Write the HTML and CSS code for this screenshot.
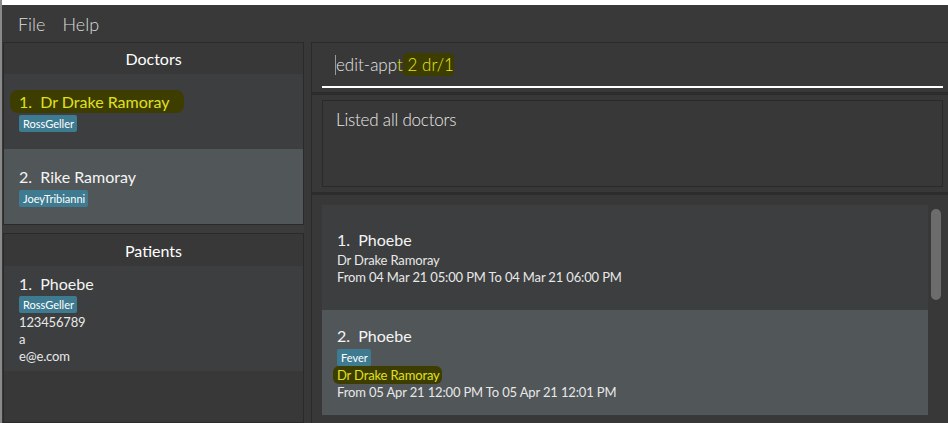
FILE: index.html
```html
<!DOCTYPE html>
<html>
<head>
<meta charset="utf-8">
<link rel="stylesheet" href="styles.css">
</head>
<body>
<div class="frame">
  <div class="topstrip"></div>
  <div class="menubar"><span>File</span><span>Help</span></div>
  <div class="main">
    <div class="left">
      <section class="panel doctors">
        <div class="panel-header">Doctors</div>
        <div class="cell dcell odd">
          <div class="name"><span class="mark">1.&nbsp; Dr Drake Ramoray</span></div>
          <div class="tags"><span class="tag">RossGeller</span></div>
        </div>
        <div class="cell dcell even">
          <div class="name">2.&nbsp; Rike Ramoray</div>
          <div class="tags"><span class="tag">JoeyTribianni</span></div>
        </div>
      </section>
      <div class="split"></div>
      <section class="panel patients">
        <div class="panel-header">Patients</div>
        <div class="cell pcell odd">
          <div class="name">1.&nbsp; Phoebe</div>
          <div class="tags"><span class="tag">RossGeller</span></div>
          <div class="detail">123456789</div>
          <div class="detail">a</div>
          <div class="detail">e@e.com</div>
        </div>
      </section>
    </div>
    <div class="right">
      <div class="command">
        <div class="field"><span class="caret"></span><span class="cmd">edit-app</span><span class="ycmd">t<span class="mark2"> 2 dr/1</span></span></div>
      </div>
      <div class="result">
        <div class="result-inner">Listed all doctors</div>
      </div>
      <div class="appts">
        <div class="appt-list">
          <div class="cell acell odd">
            <div class="name">1.&nbsp; Phoebe</div>
            <div class="detail">Dr Drake Ramoray</div>
            <div class="detail">From 04 Mar 21 05:00 PM To 04 Mar 21 06:00 PM</div>
          </div>
          <div class="cell acell even">
            <div class="name">2.&nbsp; Phoebe</div>
            <div class="tags"><span class="tag">Fever</span></div>
            <div class="detail"><span class="mark3">Dr Drake Ramoray</span></div>
            <div class="detail">From 05 Apr 21 12:00 PM To 05 Apr 21 12:01 PM</div>
          </div>
        </div>
        <div class="scrollbar"><div class="thumb"></div></div>
      </div>
    </div>
  </div>
</div>
</body>
</html>
```

FILE: styles.css
```css
* { box-sizing: border-box; }
html, body { margin: 0; padding: 0; }
body {
  width: 948px;
  height: 423px;
  overflow: hidden;
  background: #383838;
  font-family: Lato, "Open Sans", sans-serif;
  color: #ffffff;
}
.frame {
  height: 423px;
  border-left: 2px solid #8a8a8a;
  display: flex;
  flex-direction: column;
}
.topstrip { height: 5px; background: #ffffff; flex: none; }
.menubar {
  height: 37px;
  flex: none;
  background: #393939;
  display: flex;
  align-items: center;
  gap: 17px;
  padding-left: 16px;
  font-size: 18px;
  font-weight: 300;
  color: #dcdcdc;
}
.main { flex: 1; display: flex; min-height: 0; }
.left {
  width: 301px;
  margin-left: 1px;
  display: flex;
  flex-direction: column;
  flex: none;
}
.panel { border: 1px solid #2a2a2a; background: #383838; }
.doctors { border-bottom: 1px solid #2a2a2a; }
.split { height: 8px; background: #3b3b3b; flex: none; }
.patients { flex: 1; }
.panel-header {
  height: 31px;
  display: flex;
  align-items: center;
  justify-content: center;
  font-size: 16px;
  color: #ffffff;
}
.patients .panel-header { height: 32px; }
.cell {
  display: flex;
  flex-direction: column;
  justify-content: center;
  padding-left: 15px;
}
.dcell { height: 75px; }
.pcell { height: 105px; }
.odd { background: #3c3e3f; }
.even { background: #515658; }
.name { font-size: 16px; line-height: 22px; color: #f4f4f4; }
.tags { display: flex; height: 18px; align-items: center; margin-top: 1px; }
.tag {
  background: #3e7b91;
  color: #ffffff;
  font-size: 11px;
  line-height: 15px;
  padding: 1px 3px 1px 4px;
  border-radius: 2px;
}
.detail { font-size: 13px; line-height: 17px; color: #e8e8e8; letter-spacing: -0.15px; }
.acell .name { margin-bottom: 1px; }
.mark {
  color: #e0e020;
  background: #3d3d00;
  padding: 2px 14px 2px 9px;
  margin-left: -9px;
  border-radius: 8px;
}
.mark3 {
  color: #e0e020;
  background: #3d3d00;
  padding: 1px 2px 1px 4px;
  margin-left: -4px;
  border-radius: 6px;
}
.right {
  flex: 1;
  margin-left: 7px;
  border-left: 1px solid #2a2a2a;
  display: flex;
  flex-direction: column;
}
.command {
  height: 50px;
  border-top: 1px solid #2a2a2a;
  padding: 0 5px 0 10px;
  flex: none;
}
.field {
  height: 45px;
  border-bottom: 2px solid #ffffff;
  display: flex;
  align-items: center;
  padding-left: 13px;
  font-size: 17px;
  font-weight: 300;
  color: #e4e4e4;
}
.caret { width: 1px; height: 20px; background: #9a9a9a; }
.ycmd { color: #e6e61e; }
.mark2 { background: #3d3d00; padding: 1px 0; border-radius: 4px; }
.result {
  height: 100px;
  border-top: 3px solid #2c2c2c;
  padding: 5px 5px 5px 10px;
  flex: none;
}
.result-inner {
  height: 87px;
  border: 1px solid #2a2a2a;
  padding: 8px 13px;
  font-size: 17px;
  font-weight: 300;
  line-height: 22px;
  letter-spacing: -0.2px;
  color: #e8e8e8;
}
.appts {
  flex: 1;
  border-top: 3px solid #2c2c2c;
  padding: 10px 5px 0 10px;
  display: flex;
  gap: 3px;
}
.appt-list { width: 606px; display: flex; flex-direction: column; }
.acell { height: 105px; }
.scrollbar { width: 10px; padding-top: 4px; }
.thumb { height: 91px; background: #6c6c6c; border-radius: 5px; }
```
